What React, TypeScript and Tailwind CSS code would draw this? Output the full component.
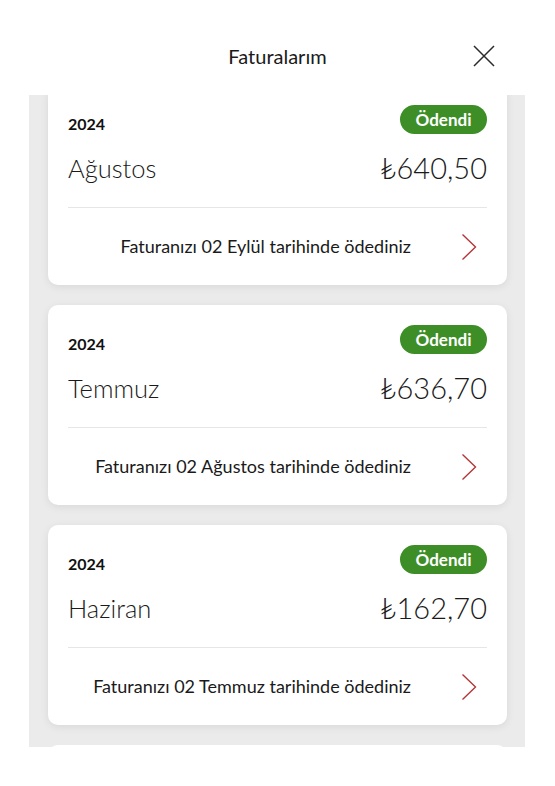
import { useState } from 'react';

interface Invoice {
  year: string;
  month: string;
  amount: string;
  note: string;
}

const invoices: Invoice[] = [
  { year: '2024', month: 'Ağustos', amount: '640,50', note: 'Faturanızı 02 Eylül tarihinde ödediniz' },
  { year: '2024', month: 'Temmuz', amount: '636,70', note: 'Faturanızı 02 Ağustos tarihinde ödediniz' },
  { year: '2024', month: 'Haziran', amount: '162,70', note: 'Faturanızı 02 Temmuz tarihinde ödediniz' },
];

function InvoiceCard({ invoice }: { invoice: Invoice }) {
  return (
    <div className="bg-white rounded-[10px] shadow-[0_2px_8px_rgba(0,0,0,0.08)] px-5 pt-5 shrink-0">
      <div className="flex items-center justify-between h-[29px]">
        <span className="text-[16px] font-bold text-[#111] translate-y-[4px]">{invoice.year}</span>
        <span className="h-[29px] w-[87px] rounded-full bg-[#3e8e27] text-white text-[17px] font-bold flex items-center justify-center">
          Ödendi
        </span>
      </div>
      <div className="flex items-center justify-between h-[36px] mt-[16px]">
        <span className="text-[25.5px] font-light text-[#1a1a1a]">{invoice.month}</span>
        <span className="text-[29px] font-light text-[#1a1a1a]">₺{invoice.amount}</span>
      </div>
      <div className="h-px bg-[#e6e6e6] mt-[21px]" />
      <div className="h-[77px] flex items-center justify-end">
        <span className="text-[18px] text-[#1a1a1a]">{invoice.note}</span>
        <svg width="16" height="28" viewBox="0 0 16 28" className="ml-[50px] mr-[10px]">
          <path d="M1.5 1.5 L14.5 14 L1.5 26.5" fill="none" stroke="#b3373a" strokeWidth="1.4" />
        </svg>
      </div>
    </div>
  );
}

export default function App() {
  const [items] = useState(invoices);

  return (
    <div className="w-[555px] h-[786px] bg-white overflow-hidden" style={{ fontFamily: 'Lato, "Noto Sans", sans-serif' }}>
      {/* Header */}
      <div className="h-[95px] relative flex items-start justify-center pt-[42px]">
        <h1 className="text-[20px] leading-[28px] text-[#1a1a1a]">Faturalarım</h1>
        <button className="absolute right-[60px] top-[45px]">
          <svg width="22" height="22" viewBox="0 0 22 22">
            <path d="M1 1 L21 21 M21 1 L1 21" stroke="#2a2a2a" strokeWidth="1.5" />
          </svg>
        </button>
      </div>

      {/* List */}
      <div className="ml-[29px] mr-[30px] h-[652px] bg-[#ebebeb] overflow-hidden pl-[19px] pr-[18px]">
        <div className="flex flex-col gap-5 -mt-[10px]">
          {items.map((inv) => (
            <InvoiceCard key={inv.month} invoice={inv} />
          ))}
          {/* next card, scrolled below */}
          <div className="bg-white rounded-[10px] h-[60px] shrink-0" />
        </div>
      </div>
    </div>
  );
}
